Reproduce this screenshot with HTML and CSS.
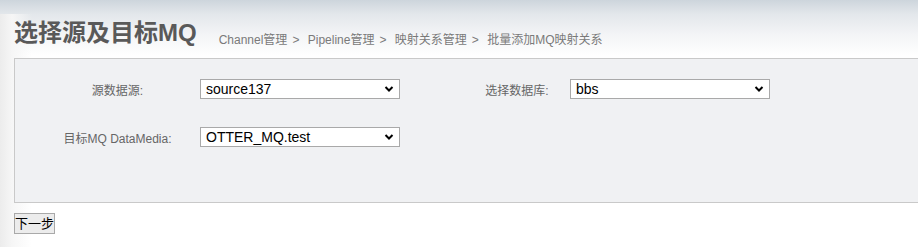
FILE: index.html
```html
<!DOCTYPE html>
<html lang="zh-CN">
<head>
  <meta charset="UTF-8">
  <title>选择源及目标MQ</title>
  <link rel="stylesheet" href="styles.css">
</head>
<body>
  <div class="page-head">
    <h1 class="page-title">选择源及目标MQ</h1>
    <div class="crumbs">
      <a href="#">Channel管理</a><span class="sep">&gt;</span>
      <a href="#">Pipeline管理</a><span class="sep">&gt;</span>
      <a href="#">映射关系管理</a><span class="sep">&gt;</span>
      <span>批量添加MQ映射关系</span>
    </div>
  </div>

  <div class="form-panel">
    <div class="form-grid">
      <label class="form-label" for="srcDs">源数据源:</label>
      <div class="form-field">
        <select id="srcDs"><option>source137</option></select>
      </div>
      <label class="form-label" for="srcDb">选择数据库:</label>
      <div class="form-field">
        <select id="srcDb"><option>bbs</option></select>
      </div>

      <label class="form-label" for="mqMedia">目标MQ DataMedia:</label>
      <div class="form-field">
        <select id="mqMedia"><option>OTTER_MQ.test</option></select>
      </div>
    </div>
  </div>

  <button class="next-btn" type="button">下一步</button>
</body>
</html>
```

FILE: styles.css
```css
* {
  box-sizing: border-box;
}

html {
  background: #fff;
}

body {
  margin: 0;
  min-height: 247px;
  font-family: "Liberation Sans", "Noto Sans CJK SC", sans-serif;
  color: #333;
  background:
    linear-gradient(to right, #ececec 0, #f6f6f6 12px, rgba(255, 255, 255, 0) 32px) 0 14px / 100% 100% no-repeat,
    linear-gradient(to bottom, #cdd5dc 0, #e3e7eb 14px, #f3f4f6 34px, #fff 56px) 0 0 / 100% 60px no-repeat,
    #fff;
}

.page-head {
  display: flex;
  align-items: flex-end;
  height: 58px;
  padding: 0 0 11px 14px;
}

.page-title {
  margin: 0;
  font-size: 24px;
  line-height: 28px;
  font-weight: bold;
  color: #595959;
}

.crumbs {
  margin-left: 22px;
  font-size: 12px;
  line-height: 14px;
  color: #7a7a7a;
}

.crumbs a {
  color: #7a7a7a;
  text-decoration: none;
}

.crumbs .sep {
  margin: 0 5px;
}

.form-panel {
  margin-left: 14px;
  border-top: 1px solid #c9c9c9;
  border-left: 1px solid #c9c9c9;
  border-bottom: 1px solid #c9c9c9;
  background: #f0f1f3;
  padding: 20px 0 55px 20px;
}

.form-grid {
  display: grid;
  grid-template-columns: 165px 264px 106px 200px;
  grid-auto-rows: 20px;
  row-gap: 28px;
  align-items: center;
}

.form-label {
  text-align: center;
  font-size: 12px;
  color: #666;
}

.form-field select {
  display: block;
  width: 200px;
  height: 20px;
  padding: 0 22px 0 5px;
  border: 1px solid #a9a9a9;
  border-radius: 0;
  background-color: #fff;
  background-image: url("data:image/svg+xml;charset=UTF-8,%3csvg xmlns='http://www.w3.org/2000/svg' viewBox='0 0 10 8'%3e%3cpolyline points='1.5 2 5 5.5 8.5 2' fill='none' stroke='%23000' stroke-width='2'/%3e%3c/svg%3e");
  background-repeat: no-repeat;
  background-position: right 5px center;
  background-size: 10px 8px;
  font-family: "Liberation Sans", "Noto Sans CJK SC", sans-serif;
  font-size: 14px;
  color: #000;
  appearance: none;
  -webkit-appearance: none;
}

.next-btn {
  display: block;
  margin: 10px 0 0 14px;
  height: 21px;
  padding: 0;
  border: 1px solid #a9a9a9;
  background: #ececec;
  font-family: "Liberation Sans", "Noto Sans CJK SC", sans-serif;
  font-size: 13px;
  line-height: 18px;
  color: #000;
  border-radius: 0;
}
```
